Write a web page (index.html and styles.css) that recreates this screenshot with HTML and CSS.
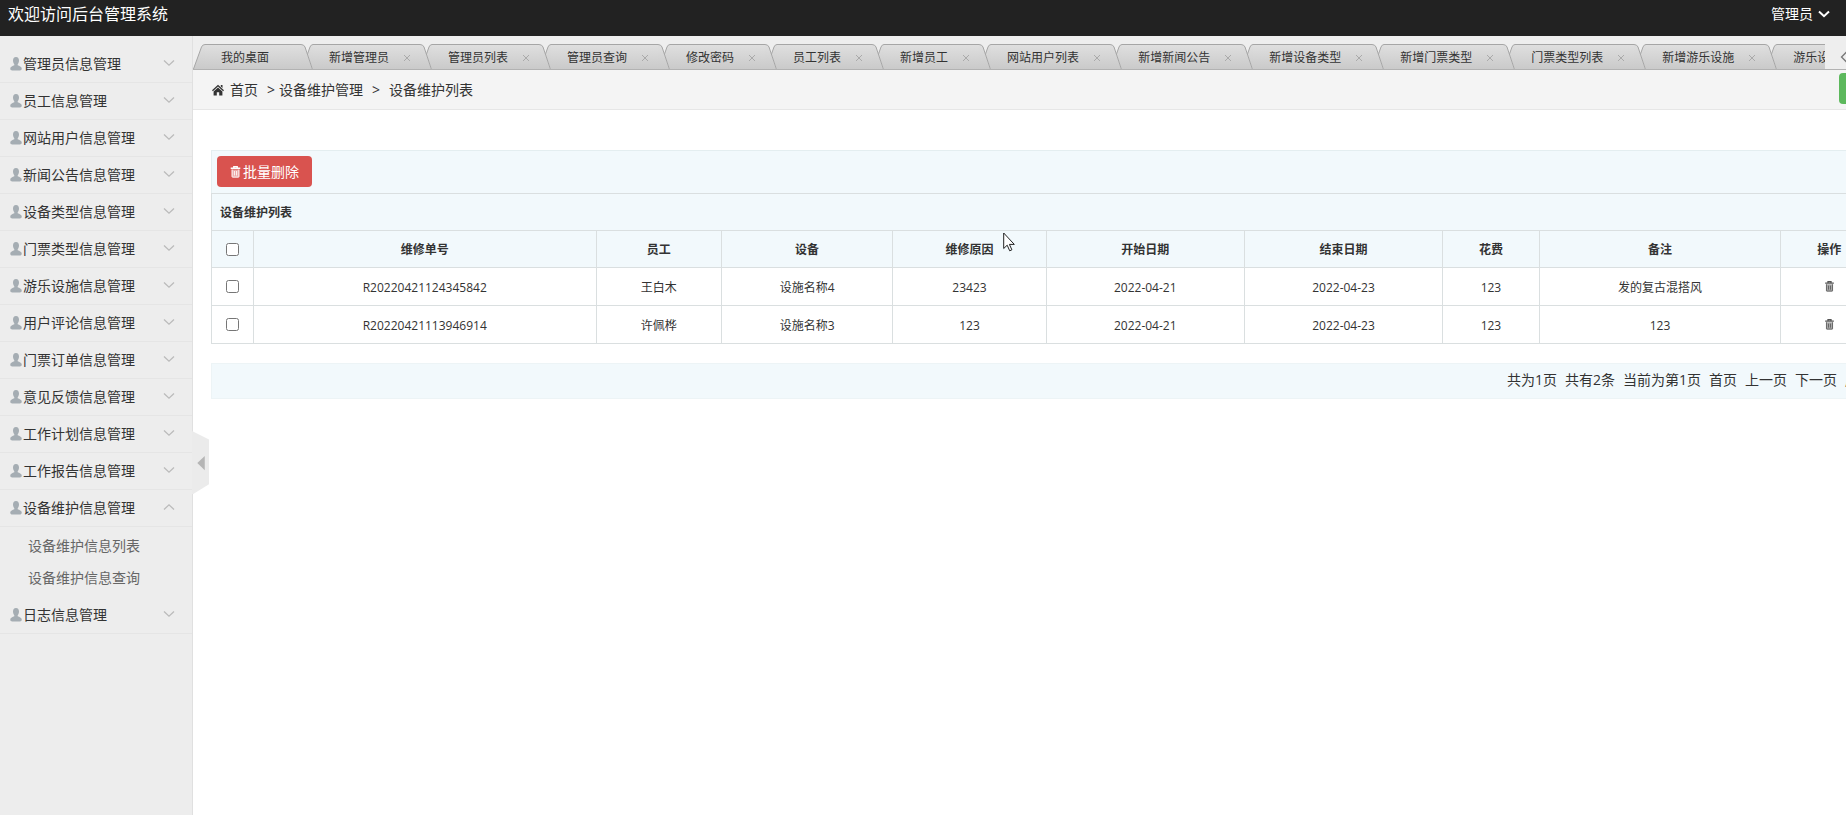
FILE: index.html
```
<!DOCTYPE html>
<html lang="zh-CN">
<head>
<meta charset="utf-8">
<title>欢迎访问后台管理系统</title>
<link rel="stylesheet" href="styles.css">
</head>
<body>
<svg class="defs" aria-hidden="true">
  <defs>
    <linearGradient id="tabfill" x1="0" y1="0" x2="0" y2="26" gradientUnits="userSpaceOnUse">
      <stop offset="0" stop-color="#dfdfdf"/><stop offset="1" stop-color="#c9c9c9"/>
    </linearGradient>
    <symbol id="tab-start" viewBox="0 0 12 26">
      <path d="M0 26 L8.5 3 Q9.5 .5 12 .5 V26Z" fill="url(#tabfill)"/>
      <path d="M.3 25.5 L8.5 3 Q9.5 .5 12 .5" fill="none" stroke="#a6a6a6"/>
    </symbol>
    <symbol id="tab-join" viewBox="0 0 12 26">
      <path d="M6.5 10 L9 3 Q10 .5 12 .5 V26Z" fill="url(#tabfill)"/>
      <path d="M6.5 10 L9 3 Q10 .5 12 .5" fill="none" stroke="#a6a6a6"/>
      <path d="M0 .5 Q3 .5 4 3 L11.7 26 H0Z" fill="url(#tabfill)"/>
      <path d="M0 .5 Q3 .5 4 3 L11.7 26" fill="none" stroke="#a6a6a6"/>
    </symbol>
    <symbol id="user" viewBox="0 0 12 14">
      <path d="M6 0C3.9 0 3 1.6 3 3.6c0 1.500.5 2.800 1.300 3.600v1.100C2.600 9 .5 9.900.3 11c-.2 1.800.7 2.500 2 2.500h7.400c1.300 0 2.200-.7 2-2.500-.2-1.100-2.300-2-4-2.700V7.200C8.500 6.400 9 5.100 9 3.600 9 1.600 8.100 0 6 0Z" fill="#a5adb3"/>
    </symbol>
    <symbol id="down" viewBox="0 0 12 8"><path d="M1 1.500 6 6.200 11 1.500" fill="none" stroke="currentColor" stroke-width="1.300"/></symbol>
    <symbol id="up" viewBox="0 0 12 8"><path d="M1 6.500 6 1.800 11 6.500" fill="none" stroke="currentColor" stroke-width="1.300"/></symbol>
    <symbol id="close" viewBox="0 0 8 8"><path d="M1 1 7 7M7 1 1 7" fill="none" stroke="#aaa"/></symbol>
    <symbol id="trash" viewBox="0 0 10 12">
      <path d="M3.300 1.500V.6h3.400v.9M.2 2.300h9.600" fill="none" stroke="currentColor" stroke-width="1.400"/>
      <path d="M1.200 3.500h7.600v7q0 1-1 1H2.200q-1 0-1-1Z" fill="currentColor" opacity=".5"/>
      <path d="M1.600 3.500v7q0 .6.600.6h5.600q.6 0 .6-.6v-7M3.900 5v4.500M6.100 5v4.500" fill="none" stroke="currentColor" stroke-width=".9"/>
    </symbol>
  </defs>
</svg>
<header class="topbar">
  <h1 class="brand">欢迎访问后台管理系统</h1>
  <button class="account" type="button">管理员<svg class="chev-lg" viewBox="0 0 12 8"><path d="M1 1.500 6 6.200 11 1.500" fill="none" stroke="#fff" stroke-width="2"/></svg></button>
</header>
<div class="layout">
  <aside class="sidebar">
    <nav class="menu">
      <button class="menu-item" type="button"><svg class="user"><use href="#user"/></svg>管理员信息管理<svg class="chev"><use href="#down"/></svg></button>
      <button class="menu-item" type="button"><svg class="user"><use href="#user"/></svg>员工信息管理<svg class="chev"><use href="#down"/></svg></button>
      <button class="menu-item" type="button"><svg class="user"><use href="#user"/></svg>网站用户信息管理<svg class="chev"><use href="#down"/></svg></button>
      <button class="menu-item" type="button"><svg class="user"><use href="#user"/></svg>新闻公告信息管理<svg class="chev"><use href="#down"/></svg></button>
      <button class="menu-item" type="button"><svg class="user"><use href="#user"/></svg>设备类型信息管理<svg class="chev"><use href="#down"/></svg></button>
      <button class="menu-item" type="button"><svg class="user"><use href="#user"/></svg>门票类型信息管理<svg class="chev"><use href="#down"/></svg></button>
      <button class="menu-item" type="button"><svg class="user"><use href="#user"/></svg>游乐设施信息管理<svg class="chev"><use href="#down"/></svg></button>
      <button class="menu-item" type="button"><svg class="user"><use href="#user"/></svg>用户评论信息管理<svg class="chev"><use href="#down"/></svg></button>
      <button class="menu-item" type="button"><svg class="user"><use href="#user"/></svg>门票订单信息管理<svg class="chev"><use href="#down"/></svg></button>
      <button class="menu-item" type="button"><svg class="user"><use href="#user"/></svg>意见反馈信息管理<svg class="chev"><use href="#down"/></svg></button>
      <button class="menu-item" type="button"><svg class="user"><use href="#user"/></svg>工作计划信息管理<svg class="chev"><use href="#down"/></svg></button>
      <button class="menu-item" type="button"><svg class="user"><use href="#user"/></svg>工作报告信息管理<svg class="chev"><use href="#down"/></svg></button>
      <button class="menu-item" type="button" aria-expanded="true"><svg class="user"><use href="#user"/></svg>设备维护信息管理<svg class="chev"><use href="#up"/></svg></button>
      <div class="submenu">
        <a href="#list">设备维护信息列表</a>
        <a href="#query">设备维护信息查询</a>
      </div>
      <button class="menu-item" type="button"><svg class="user"><use href="#user"/></svg>日志信息管理<svg class="chev"><use href="#down"/></svg></button>
    </nav>
    <button class="collapse" type="button" aria-label="收起菜单"><svg viewBox="0 0 16 60"><path d="M0 0 16 8V50L0 60Z" fill="#ebebeb"/><path d="M12 23.500V37L5 30.200Z" fill="#b5b5b5"/></svg></button>
  </aside>
  <main class="main">
    <div class="tabbar">
      <ul class="tabs">
        <li class="tab"><svg class="cap"><use href="#tab-start"/></svg><a class="tab-body first" href="#t">我的桌面</a></li>
        <li class="tab"><svg class="cap"><use href="#tab-join"/></svg><div class="tab-body"><a href="#t">新增管理员</a><button type="button" aria-label="关闭"><svg><use href="#close"/></svg></button></div></li>
        <li class="tab"><svg class="cap"><use href="#tab-join"/></svg><div class="tab-body"><a href="#t">管理员列表</a><button type="button" aria-label="关闭"><svg><use href="#close"/></svg></button></div></li>
        <li class="tab"><svg class="cap"><use href="#tab-join"/></svg><div class="tab-body"><a href="#t">管理员查询</a><button type="button" aria-label="关闭"><svg><use href="#close"/></svg></button></div></li>
        <li class="tab"><svg class="cap"><use href="#tab-join"/></svg><div class="tab-body"><a href="#t">修改密码</a><button type="button" aria-label="关闭"><svg><use href="#close"/></svg></button></div></li>
        <li class="tab"><svg class="cap"><use href="#tab-join"/></svg><div class="tab-body"><a href="#t">员工列表</a><button type="button" aria-label="关闭"><svg><use href="#close"/></svg></button></div></li>
        <li class="tab"><svg class="cap"><use href="#tab-join"/></svg><div class="tab-body"><a href="#t">新增员工</a><button type="button" aria-label="关闭"><svg><use href="#close"/></svg></button></div></li>
        <li class="tab"><svg class="cap"><use href="#tab-join"/></svg><div class="tab-body"><a href="#t">网站用户列表</a><button type="button" aria-label="关闭"><svg><use href="#close"/></svg></button></div></li>
        <li class="tab"><svg class="cap"><use href="#tab-join"/></svg><div class="tab-body"><a href="#t">新增新闻公告</a><button type="button" aria-label="关闭"><svg><use href="#close"/></svg></button></div></li>
        <li class="tab"><svg class="cap"><use href="#tab-join"/></svg><div class="tab-body"><a href="#t">新增设备类型</a><button type="button" aria-label="关闭"><svg><use href="#close"/></svg></button></div></li>
        <li class="tab"><svg class="cap"><use href="#tab-join"/></svg><div class="tab-body"><a href="#t">新增门票类型</a><button type="button" aria-label="关闭"><svg><use href="#close"/></svg></button></div></li>
        <li class="tab"><svg class="cap"><use href="#tab-join"/></svg><div class="tab-body"><a href="#t">门票类型列表</a><button type="button" aria-label="关闭"><svg><use href="#close"/></svg></button></div></li>
        <li class="tab"><svg class="cap"><use href="#tab-join"/></svg><div class="tab-body"><a href="#t">新增游乐设施</a><button type="button" aria-label="关闭"><svg><use href="#close"/></svg></button></div></li>
        <li class="tab"><svg class="cap"><use href="#tab-join"/></svg><div class="tab-body"><a href="#t">游乐设施列表</a></div></li>
      </ul>
      <button class="tab-scroll" type="button" aria-label="向左滚动"><svg viewBox="0 0 8 12"><path d="M6.500 1 1.500 6l5 5" fill="none" stroke="#777" stroke-width="1.300"/></svg></button>
    </div>
    <nav class="crumbs">
      <svg class="home" viewBox="0 0 12 12"><path d="M0 6.300 6 .8l6 5.500-.9.900L6 2.600.9 7.200Z" fill="#333"/><path d="M8.800.9h1.700v3L8.800 2.400ZM6 3.600l4.400 3.900v3.900H7.200V8.200H4.800v3.200H1.600V7.500Z" fill="#333"/></svg>
      <a href="#home">首页</a><span class="sep">&gt;</span><span>设备维护管理</span><span class="sep wide">&gt;</span><span>设备维护列表</span>
      <button class="refresh" type="button" aria-label="刷新"></button>
    </nav>
    <div class="content">
      <div class="toolbar"><button class="danger" type="button"><svg><use href="#trash"/></svg>批量删除</button></div>
      <table class="grid">
        <colgroup><col class="c-check"><col class="c-no"><col class="c-staff"><col class="c-device"><col class="c-reason"><col class="c-date"><col class="c-date"><col class="c-cost"><col class="c-note"><col class="c-cost"></colgroup>
        <thead>
          <tr><th class="title" colspan="10">设备维护列表</th></tr>
          <tr><th><input type="checkbox" aria-label="全选"></th><th>维修单号</th><th>员工</th><th>设备</th><th>维修原因</th><th>开始日期</th><th>结束日期</th><th>花费</th><th>备注</th><th>操作</th></tr>
        </thead>
        <tbody>
          <tr><td><input type="checkbox" aria-label="选择"></td><td>R20220421124345842</td><td>王白木</td><td>设施名称4</td><td>23423</td><td>2022-04-21</td><td>2022-04-23</td><td>123</td><td>发的复古混搭风</td><td class="ops"><button class="del" type="button" aria-label="删除"><svg><use href="#trash"/></svg></button></td></tr>
          <tr><td><input type="checkbox" aria-label="选择"></td><td>R20220421113946914</td><td>许佩桦</td><td>设施名称3</td><td>123</td><td>2022-04-21</td><td>2022-04-23</td><td>123</td><td>123</td><td class="ops"><button class="del" type="button" aria-label="删除"><svg><use href="#trash"/></svg></button></td></tr>
        </tbody>
      </table>
      <div class="pager"><span>共为1页</span><span>共有2条</span><span>当前为第1页</span><a href="#p">首页</a><a href="#p">上一页</a><a href="#p">下一页</a><a href="#p">尾页</a></div>
    </div>
  </main>
</div>
<svg class="cursor" viewBox="0 0 12 20"><path d="M.7 1v15.500l3.500-3.300 2.500 5.600 2.200-1-2.500-5.400h4.900Z" fill="#fff" stroke="#222"/></svg>
</body>
</html>
```
FILE: styles.css
```
* { box-sizing: border-box; }
body {
  margin: 0;
  min-height: 100vh;
  display: flex;
  flex-direction: column;
  overflow: hidden;
  background: #fff;
  color: #333;
  font: 14px/20px "Open Sans", "Noto Sans CJK SC", sans-serif;
}
button { margin: 0; padding: 0; border: 0; background: none; color: inherit; font: inherit; }
a { color: inherit; text-decoration: none; }
svg { display: block; flex: none; }
.defs { position: absolute; width: 0; height: 0; }

.topbar {
  display: flex;
  justify-content: space-between;
  align-items: center;
  height: 36px;
  padding: 0 16px 8px 8px;
  background: #222;
  color: #fff;
}
.brand { margin: 0; font-size: 16px; font-weight: 400; }
.account { display: flex; align-items: center; gap: 5px; }
.chev-lg { width: 12px; height: 8px; }

.layout { flex: 1; display: flex; }
.sidebar {
  position: relative;
  flex: none;
  width: 193px;
  padding-top: 10px;
  background: #ededed;
  border-right: 1px solid #e0e0e0;
}
.menu { display: flex; flex-direction: column; }
.menu-item {
  display: flex;
  align-items: center;
  height: 37px;
  padding: 0 17px 0 10px;
  border-bottom: 1px solid #e5e5e5;
  text-align: left;
}
.user { width: 12px; height: 14px; margin-right: 1px; }
.chev { width: 12px; height: 8px; margin: 0 0 2px auto; color: #bbb; }
.submenu { display: flex; flex-direction: column; padding: 3px 0 3px 28px; color: #666; }
.submenu a { line-height: 32px; }
.collapse { position: absolute; left: 100%; top: calc(50% + 5px); width: 17px; height: 60px; }

.main { flex: 1; min-width: 0; overflow: hidden; }
.tabbar {
  display: flex;
  height: 34px;
  padding-top: 8px;
  background: #eee;
  border-bottom: 1px solid #b2b2b2;
}
.tabs { flex: 1; min-width: 0; display: flex; margin: 0; padding: 0; overflow: hidden; list-style: none; }
.tab { display: flex; flex: none; font-size: 12px; }
.cap { width: 12px; height: 26px; }
.tab-body {
  display: flex;
  align-items: center;
  gap: 14px;
  height: 26px;
  padding: 0 9px 0 16px;
  border-top: 1px solid #a6a6a6;
  background: linear-gradient(#dfdfdf, #c9c9c9);
}
.tab-body.first { padding-right: 32px; }
.tab-body button, .tab-body button svg { width: 8px; height: 8px; }
.tab-scroll { width: 21px; padding-left: 15px; overflow: hidden; }
.tab-scroll svg { width: 8px; height: 12px; }

.crumbs {
  display: flex;
  align-items: center;
  height: 40px;
  padding-left: 19px;
  background: #f4f4f4;
  border-bottom: 1px solid #e6e6e6;
}
.home { width: 12px; height: 12px; margin-right: 6px; }
.sep { margin: 0 4px 0 9px; }
.sep.wide { margin-right: 9px; }
.refresh {
  width: 34px;
  height: 31px;
  margin: 0 -27px 2px auto;
  border-radius: 4px;
  background: #5cb85c;
}

.content { margin: 40px -32px 0 18px; }
.toolbar { padding: 5px 5px 6px; border: 1px solid #e4eef0; border-bottom: 0; background: #f2f9fc; }
.danger {
  display: flex;
  align-items: center;
  gap: 2px;
  height: 31px;
  padding: 0 13px;
  border-radius: 4px;
  background: #d9534f;
  color: #fff;
}
.danger svg { width: 11px; height: 12px; }

.grid { width: 100%; table-layout: fixed; border-collapse: collapse; font-size: 12px; text-align: center; }
.grid th, .grid td { height: 38px; padding: 2px 8px 0; border: 1px solid #dadfe0; }
.grid th { height: 37px; background: #f2f9fc; font-weight: 700; }
.grid tr > .title { text-align: left; }
.grid tr > .ops { padding: 0; }
.grid input { display: block; width: 13px; height: 13px; margin: 0 auto 2px; }
.c-check { width: 2.5%; }
.c-no { width: 20.6%; }
.c-staff { width: 7.5%; }
.c-device { width: 10.3%; }
.c-reason { width: 9.2%; }
.c-date { width: 11.9%; }
.c-cost { width: 5.8%; }
.c-note { width: 14.5%; }
.del { display: block; margin: 0 auto; color: #555; }
.del svg { width: 9px; height: 11px; }

.pager {
  display: flex;
  justify-content: flex-end;
  gap: 8px;
  margin-top: 19px;
  padding: 6px 4px 8px;
  border: 1px solid #edf4f6;
  background: #f2f9fc;
}
.cursor { position: absolute; left: 1003px; top: 232px; width: 12px; height: 20px; }
```
